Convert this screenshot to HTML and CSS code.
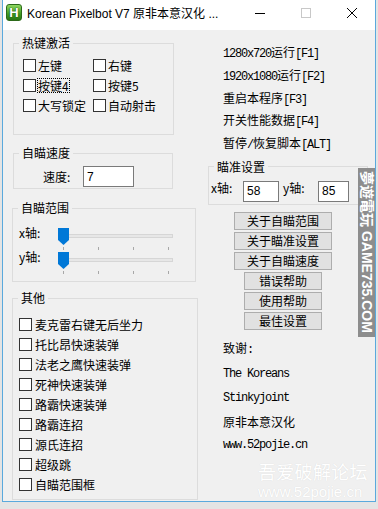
FILE: index.html
```html
<!DOCTYPE html>
<html lang="zh-CN">
    <head>
        <meta charset="UTF-8">
        <title>Korean Pixelbot V7</title>
        <link rel="stylesheet" href="styles.css">
    </head>
    <body>
        <div class="win">
            <div class="titlebar">
                <span class="app-icon">H</span>
                <span class="title">Korean Pixelbot V7 原非本意汉化 ...</span>
                <span class="tb-btn">
                    <svg width="10" height="10" viewBox="0 0 10 10"><path d="M0 5.5H10" stroke="#000" stroke-width="1"/></svg>
                </span>
                <span class="tb-btn">
                    <svg width="10" height="10" viewBox="0 0 10 10"><rect x="0.5" y="0.5" width="9" height="9" fill="none" stroke="#c8c8c8"/></svg>
                </span>
                <span class="tb-btn">
                    <svg width="10" height="10" viewBox="0 0 10 10"><path d="M0 0L10 10M10 0L0 10" stroke="#000" stroke-width="1"/></svg>
                </span>
            </div>
            <div class="client">
                <div class="col-left">
                    <fieldset class="grp g-hotkey">
                        <legend>热键激活</legend>
                        <div class="chk-grid">
                            <label class="chk"><span class="box"></span>左键</label>
                            <label class="chk"><span class="box"></span>右键</label>
                            <label class="chk"><span class="box"></span><span class="focus">按键4</span></label>
                            <label class="chk"><span class="box"></span>按键5</label>
                            <label class="chk"><span class="box"></span>大写锁定</label>
                            <label class="chk"><span class="box"></span>自动射击</label>
                        </div>
                    </fieldset>
                    <fieldset class="grp g-speed">
                        <legend>自瞄速度</legend>
                        <div class="row">
                            <span class="lbl-speed">速度:</span>
                            <input class="edit e-speed" type="text" value="7">
                        </div>
                    </fieldset>
                    <fieldset class="grp g-range">
                        <legend>自瞄范围</legend>
                        <div class="slide-row">
                            <span class="lbl-axis">x轴:</span>
                            <div class="slider">
                                <div class="track"></div>
                                <svg class="thumb" width="11" height="17" viewBox="0 0 11 17"><polygon points="0,0 11,0 11,12 5.5,17 0,12" fill="#0078d7"/></svg>
                                <div class="ticks"><i></i><i></i><i></i><i></i></div>
                            </div>
                        </div>
                        <div class="slide-row">
                            <span class="lbl-axis">y轴:</span>
                            <div class="slider">
                                <div class="track"></div>
                                <svg class="thumb" width="11" height="17" viewBox="0 0 11 17"><polygon points="0,0 11,0 11,12 5.5,17 0,12" fill="#0078d7"/></svg>
                                <div class="ticks"><i></i><i></i><i></i><i></i></div>
                            </div>
                        </div>
                    </fieldset>
                    <fieldset class="grp g-other">
                        <legend>其他</legend>
                        <div class="chk-list">
                            <label class="chk"><span class="box"></span>麦克雷右键无后坐力</label>
                            <label class="chk"><span class="box"></span>托比昂快速装弹</label>
                            <label class="chk"><span class="box"></span>法老之鹰快速装弹</label>
                            <label class="chk"><span class="box"></span>死神快速装弹</label>
                            <label class="chk"><span class="box"></span>路霸快速装弹</label>
                            <label class="chk"><span class="box"></span>路霸连招</label>
                            <label class="chk"><span class="box"></span>源氏连招</label>
                            <label class="chk"><span class="box"></span>超级跳</label>
                            <label class="chk"><span class="box"></span>自瞄范围框</label>
                        </div>
                    </fieldset>
                </div>
                <div class="col-right">
                    <div class="keys">
                        <div><span class="m">1280x720</span>运行<span class="m">[F1]</span></div>
                        <div><span class="m">1920x1080</span>运行<span class="m">[F2]</span></div>
                        <div>重启本程序<span class="m">[F3]</span></div>
                        <div>开关性能数据<span class="m">[F4]</span></div>
                        <div>暂停<span class="m">/</span>恢复脚本<span class="m">[ALT]</span></div>
                    </div>
                    <fieldset class="grp g-aim">
                        <legend>瞄准设置</legend>
                        <div class="row">
                            <span class="lbl-x">x轴:</span>
                            <input class="edit e-x" type="text" value="58">
                            <span class="lbl-y">y轴:</span>
                            <input class="edit e-y" type="text" value="85">
                        </div>
                    </fieldset>
                    <div class="btns">
                        <button class="btn wide">关于自瞄范围</button>
                        <button class="btn wide">关于瞄准设置</button>
                        <button class="btn wide">关于自瞄速度</button>
                        <button class="btn">错误帮助</button>
                        <button class="btn">使用帮助</button>
                        <button class="btn">最佳设置</button>
                    </div>
                    <div class="credits">
                        <div>致谢<span class="m">:</span></div>
                        <div class="m">The Koreans</div>
                        <div class="m">Stinkyjoint</div>
                        <div>原非本意汉化</div>
                        <div class="m">www.52pojie.cn</div>
                    </div>
                </div>
            </div>
            <div class="wm-cn">吾爱破解论坛</div>
            <div class="wm-url">www.52pojie.cn</div>
            <div class="wm-tag">夢遊電玩 GAME735.COM</div>
        </div>
    </body>
</html>
```

FILE: styles.css
```css
* {
    box-sizing: border-box;
}
body {
    margin: 0;
    background: #e4e4e4;
    font-family: "Noto Sans CJK SC", sans-serif;
    font-size: 12px;
    color: #000;
}
.win {
    position: relative;
    width: 374px;
    height: 502px;
    margin-left: 2px;
    background: #f0f0f0;
    border: 1px solid #5aa9dd;
    border-top: 0;
}
.titlebar {
    display: flex;
    height: 30px;
    background: #fff;
}
.app-icon {
    width: 16px;
    height: 17px;
    margin: 4px 0 0 3px;
    border: 1px solid #2c6a1a;
    border-radius: 3px;
    background: linear-gradient(#8fd861, #3d9a22 60%, #2a7515);
    color: #fff;
    font: bold 13px/15px "Liberation Sans", sans-serif;
    text-align: center;
    text-shadow: 0 0 1px #174a0a, 0 0 1px #174a0a;
}
.title {
    flex: 1;
    margin: 6px 0 0 5px;
    font: 12px/16px "Liberation Sans", "Noto Sans CJK SC", sans-serif;
}
.tb-btn {
    width: 46px;
    display: flex;
    justify-content: center;
    padding-top: 8px;
}
.tb-btn svg {
    display: block;
}
.client {
    display: flex;
    height: 471px;
}
.col-left {
    width: 197px;
}
.col-right {
    flex: 1;
}

/* group boxes */
.grp {
    margin: 0;
    padding: 0;
    min-width: 0;
    border: 1px solid #dcdcdc;
}
.grp legend {
    margin-left: 5px;
    padding: 0 3px;
    line-height: 14px;
}
.g-hotkey {
    margin: 6px 0 0 10px;
    width: 161px;
    height: 99px;
}
.g-speed {
    margin: 11px 0 0 10px;
    width: 160px;
    height: 43px;
}
.g-range {
    margin: 12px 0 0 9px;
    width: 184px;
    height: 81px;
}
.g-other {
    margin: 9px 0 0 9px;
    width: 186px;
    height: 209px;
}
.g-aim {
    margin: 4px 0 0 8px;
    width: 160px;
    height: 45px;
}

/* checkboxes */
.chk {
    display: flex;
    align-items: center;
    height: 20px;
    white-space: nowrap;
}
.box {
    width: 13px;
    height: 13px;
    margin-right: 3px;
    border: 1px solid #333;
    background: #fff;
    flex: none;
}
.focus {
    outline: 1px dotted #000;
    line-height: 13px;
}
.chk-grid {
    display: grid;
    grid-template-columns: 70px 70px;
    padding: 5px 0 0 9px;
}
.chk-grid .box {
    margin-right: 2px;
}
.chk-list {
    padding: 9px 0 0 6px;
}

/* edits */
.row {
    display: flex;
    align-items: center;
}
.edit {
    height: 21px;
    margin: 0;
    padding: 0 3px;
    border: 1px solid #7a7a7a;
    background: #fff;
    font: 12px "Liberation Sans", sans-serif;
    color: #000;
    outline: none;
}
.g-speed .row {
    padding: 6px 0 0 29px;
}
.lbl-speed {
    width: 40px;
}
.e-speed {
    width: 51px;
}
.g-aim .row {
    align-items: flex-start;
    padding: 7px 0 0 2px;
}
.lbl-x,
.lbl-y {
    line-height: 14px;
    width: 32px;
}
.lbl-y {
    width: 35px;
    margin-left: 4px;
}
.e-x {
    width: 36px;
}
.e-y {
    width: 31px;
}

/* sliders */
.slide-row {
    display: flex;
    height: 24px;
    padding-left: 6px;
}
.slide-row:first-of-type {
    margin-top: 6px;
}
.lbl-axis {
    width: 39px;
    line-height: 24px;
}
.slider {
    position: relative;
    width: 115px;
}
.track {
    position: absolute;
    left: 5px;
    top: 13px;
    width: 110px;
    height: 4px;
    background: #e7e7e7;
    border: 1px solid #d6d6d6;
}
.thumb {
    position: absolute;
    left: 0;
    top: 7px;
}
.ticks {
    position: absolute;
    left: 5px;
    top: 26px;
    width: 106px;
    display: flex;
    justify-content: space-between;
}
.ticks i {
    width: 1px;
    height: 3px;
    background: #a8a8a8;
}

/* right side text */
.m {
    font-family: "Liberation Mono", monospace;
    font-size: 12px;
    letter-spacing: -1.2px;
}
.keys {
    margin-top: 12px;
    padding-left: 23px;
    line-height: 19.8px;
    white-space: nowrap;
}
.btns {
    display: flex;
    flex-direction: column;
    align-items: center;
    gap: 2px;
    width: 98px;
    margin: 7px 0 0 34px;
}
.btn {
    width: 78px;
    height: 18px;
    padding: 0;
    border: 1px solid #adadad;
    background: #e1e1e1;
    font: 12px/16px "Noto Sans CJK SC", sans-serif;
    color: #000;
}
.btn.wide {
    width: 98px;
}
.credits {
    margin-top: 6px;
    padding-left: 23px;
    line-height: 23.8px;
    white-space: nowrap;
}

/* watermarks over the window */
.wm-cn {
    position: absolute;
    left: 255px;
    top: 461px;
    font-size: 18px;
    line-height: 20px;
    letter-spacing: 0.3px;
    color: #fff;
    text-shadow: 0 0 1px rgba(0, 0, 0, 0.12);
}
.wm-url {
    position: absolute;
    left: 255px;
    top: 484px;
    font: 15px/16px "Liberation Sans", sans-serif;
    color: #fff;
    text-shadow: 0 0 1px rgba(0, 0, 0, 0.12);
}
.wm-tag {
    position: absolute;
    left: 355px;
    top: 168px;
    width: 17px;
    height: 169px;
    background: #8d8d8d;
    color: #fff;
    writing-mode: vertical-rl;
    text-orientation: sideways;
    font: bold 14px/17px "Liberation Sans", "Noto Sans CJK TC", sans-serif;
    padding-top: 3px;
    white-space: nowrap;
    overflow: hidden;
}
```
